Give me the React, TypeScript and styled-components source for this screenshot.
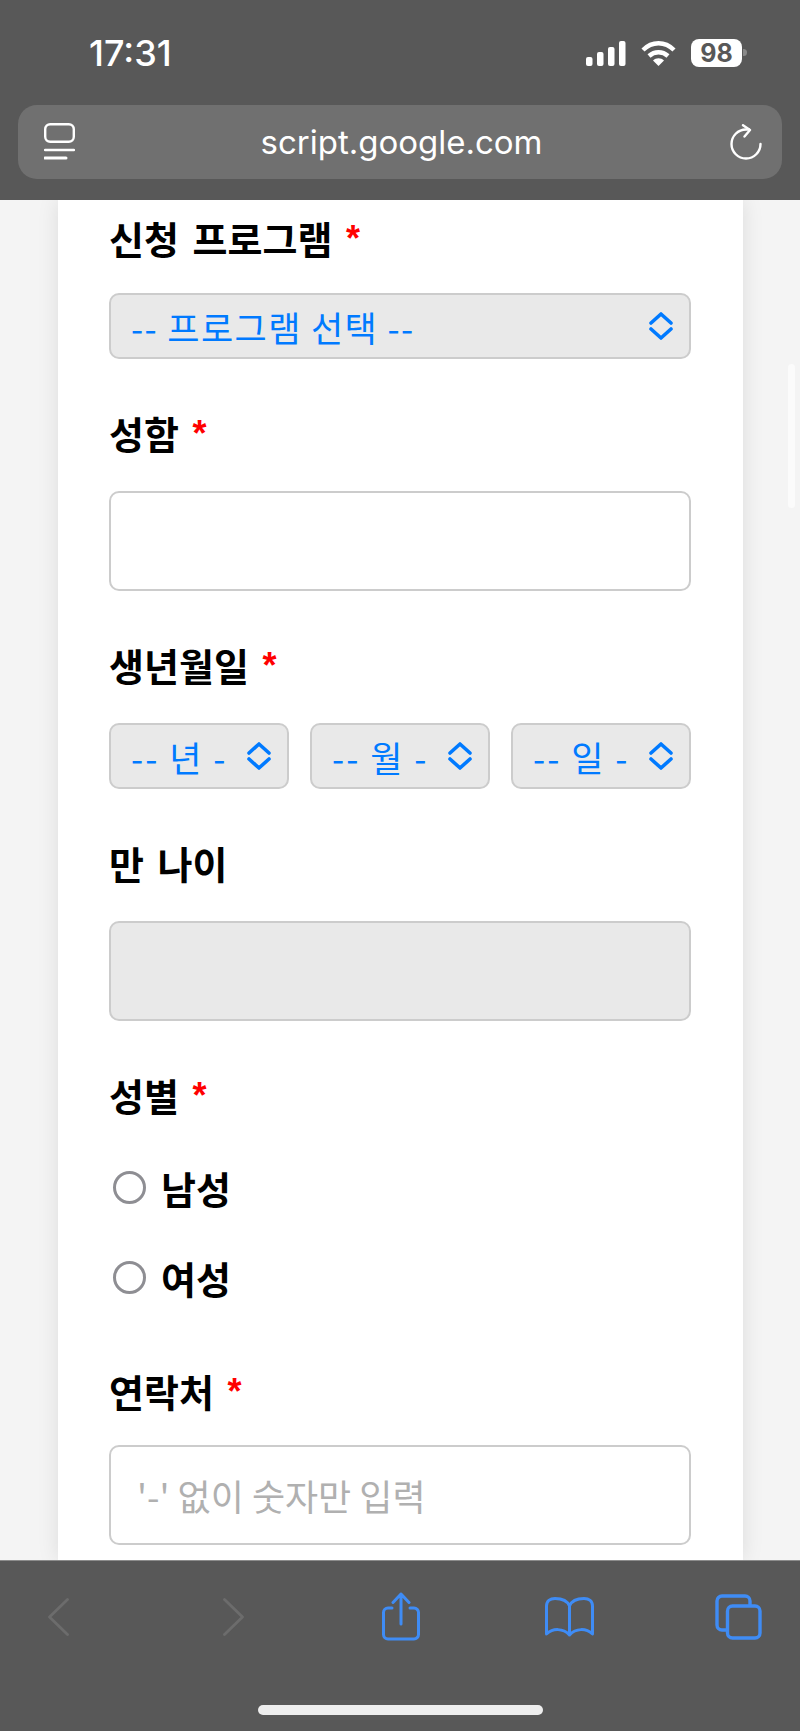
import styled, { createGlobalStyle } from "styled-components";

const GlobalStyle = createGlobalStyle`
  html, body {
    margin: 0;
    padding: 0;
    background: #f4f4f4;
  }
  * {
    box-sizing: border-box;
  }
`;

const Chevrons = () => (
  <ChevronSvg viewBox="0 0 24 28">
    <path d="M2 11 L12 2 L22 11 M2 17 L12 26 L22 17" />
  </ChevronSvg>
);

function App() {
  return (
    <Phone>
      <GlobalStyle />
      <BrowserHeader>
        <StatusBar>
          <Clock>17:31</Clock>
          <StatusIcons>
            <svg width="40" height="25" viewBox="0 0 40 25" fill="#fff">
              <rect x="0" y="16" width="6.5" height="9" rx="2" />
              <rect x="11" y="11" width="6.5" height="14" rx="2" />
              <rect x="22" y="6" width="6.5" height="19" rx="2" />
              <rect x="33" y="0" width="6.5" height="25" rx="2" />
            </svg>
            <svg width="35" height="25" viewBox="0 0 35 25" fill="none" stroke="#fff" strokeWidth="4.4">
              <path d="M2 9 C11 0 24 0 33 9" />
              <path d="M8 15 C13.500 10 21.500 10 27 15" />
              <path d="M12 19.500 L17.500 25 L23 19.500 C20 16.500 15 16.500 12 19.500 Z" fill="#fff" stroke="none" />
            </svg>
            <Battery>
              <BatteryLevel>98</BatteryLevel>
              <BatteryTip />
            </Battery>
          </StatusIcons>
        </StatusBar>
        <AddressBar>
          <svg width="31" height="38" viewBox="0 0 31 38" fill="none" stroke="#fff" strokeWidth="2.4" strokeLinecap="round">
            <rect x="1.200" y="1.200" width="28.600" height="17.600" rx="5" />
            <path d="M1 27 H30" />
            <path d="M1 35 H22" strokeWidth="3" />
          </svg>
          <Url>script.google.com</Url>
          <svg width="32" height="36" viewBox="0 0 32 36" fill="none" stroke="#fff" strokeWidth="2.400" strokeLinecap="round" strokeLinejoin="round">
            <path d="M30.500 20 A14.500 14.500 0 1 1 16 5.500 H19" />
            <path d="M13 1.200 L20 6 L14.500 12.500" />
          </svg>
        </AddressBar>
      </BrowserHeader>

      <Content>
        <ScrollThumb />
        <FormCard>
          <Group>
            <FieldLabel $gap={31}>
              신청 프로그램 <Required>*</Required>
            </FieldLabel>
            <SelectBox>
              -- 프로그램 선택 --
              <Chevrons />
            </SelectBox>
          </Group>

          <Group>
            <FieldLabel>
              성함 <Required>*</Required>
            </FieldLabel>
            <TextField type="text" />
          </Group>

          <Group>
            <FieldLabel>
              생년월일 <Required>*</Required>
            </FieldLabel>
            <DateRow>
              <SelectBox $spacing={2}>
                -- 년 -
                <Chevrons />
              </SelectBox>
              <SelectBox $spacing={2}>
                -- 월 -
                <Chevrons />
              </SelectBox>
              <SelectBox $spacing={2}>
                -- 일 -
                <Chevrons />
              </SelectBox>
            </DateRow>
          </Group>

          <Group>
            <FieldLabel>만 나이</FieldLabel>
            <TextField type="text" readOnly $disabled />
          </Group>

          <Group>
            <FieldLabel>
              성별 <Required>*</Required>
            </FieldLabel>
            <RadioList>
              <RadioRow>
                <RadioInput type="radio" name="gender" />
                남성
              </RadioRow>
              <RadioRow>
                <RadioInput type="radio" name="gender" />
                여성
              </RadioRow>
            </RadioList>
          </Group>

          <Group>
            <FieldLabel $gap={30}>
              연락처 <Required>*</Required>
            </FieldLabel>
            <TextField type="text" placeholder="'-' 없이 숫자만 입력" />
          </Group>
        </FormCard>
      </Content>

      <BottomBar>
        <ToolRow>
          <svg width="21" height="38" viewBox="0 0 21 38" fill="none" stroke="#6c6c6c" strokeWidth="2.800" strokeLinecap="round" strokeLinejoin="round">
            <path d="M19.500 1.500 L1.500 19 L19.500 36.500" />
          </svg>
          <svg width="21" height="38" viewBox="0 0 21 38" fill="none" stroke="#6c6c6c" strokeWidth="2.800" strokeLinecap="round" strokeLinejoin="round">
            <path d="M1.500 1.500 L19.500 19 L1.500 36.500" />
          </svg>
          <svg width="38" height="49" viewBox="0 0 38 49" fill="none" stroke="#3f8cf5" strokeWidth="3" strokeLinecap="round" strokeLinejoin="round">
            <path d="M10 16 H6 A4.500 4.500 0 0 0 1.500 20.500 V42.500 A4.500 4.500 0 0 0 6 47 H32 A4.500 4.500 0 0 0 36.500 42.500 V20.500 A4.500 4.500 0 0 0 32 16 H28" />
            <path d="M19 32 V2 M11 10.500 L19 2 L27 10.500" />
          </svg>
          <svg width="49" height="40" viewBox="0 0 49 40" fill="none" stroke="#3f8cf5" strokeWidth="3" strokeLinecap="round" strokeLinejoin="round">
            <path d="M24.500 9 C22 3 16 1.500 10 1.500 C5 1.500 1.500 4 1.500 9 V37 C8 31 18 31 24.500 38 C31 31 41 31 47.500 37 V9 C47.500 4 44 1.500 39 1.500 C33 1.500 27 3 24.500 9 V38" />
          </svg>
          <svg width="47" height="46" viewBox="0 0 47 46" fill="none" stroke="#3f8cf5" strokeWidth="3.400" strokeLinejoin="round">
            <path d="M12 36 H7 A5 5 0 0 1 2 31 V7 A5 5 0 0 1 7 2 H30 A5 5 0 0 1 35 7 V12" />
            <rect x="12.500" y="12" width="32.500" height="32" rx="5" />
          </svg>
        </ToolRow>
        <HomeIndicator />
      </BottomBar>
    </Phone>
  );
}

export default App;

const Phone = styled.div`
  width: 800px;
  height: 1731px;
  display: flex;
  flex-direction: column;
  overflow: hidden;
  background: #f4f4f4;
  font-family: "Noto Sans CJK KR", sans-serif;
`;

const BrowserHeader = styled.header`
  height: 200px;
  flex: none;
  background: #585858;
  padding-top: 39px;
  display: flex;
  flex-direction: column;
`;

const StatusBar = styled.div`
  height: 28px;
  padding: 0 58px 0 89px;
  display: flex;
  align-items: center;
  justify-content: space-between;
`;

const Clock = styled.div`
  font-family: Inter, sans-serif;
  font-size: 36px;
  font-weight: 500;
  color: #fff;
  line-height: 28px;
`;

const StatusIcons = styled.div`
  display: flex;
  align-items: center;
  gap: 15px;
`;

const Battery = styled.div`
  position: relative;
  width: 51px;
  height: 28px;
  border-radius: 8px;
  background: #fff;
  display: flex;
  align-items: center;
  justify-content: center;
`;

const BatteryLevel = styled.span`
  font-family: Inter, sans-serif;
  font-size: 25px;
  font-weight: 700;
  color: #585858;
`;

const BatteryTip = styled.span`
  position: absolute;
  right: -5px;
  top: 10px;
  width: 4px;
  height: 7px;
  border-radius: 0 4px 4px 0;
  background: #8a8a8a;
`;

const AddressBar = styled.div`
  margin: 38px 18px 0;
  height: 74px;
  border-radius: 19px;
  background: #707070;
  padding: 0 20px 0 26px;
  display: flex;
  align-items: center;
  justify-content: space-between;
`;

const Url = styled.div`
  font-family: Inter, sans-serif;
  font-size: 33px;
  color: #fff;
  margin-right: 2px;
`;

const Content = styled.main`
  position: relative;
  flex: 1;
  min-height: 0;
  overflow: hidden;
`;

const ScrollThumb = styled.div`
  position: absolute;
  right: 5px;
  top: 164px;
  width: 7px;
  height: 144px;
  border-radius: 4px;
  background: #fbfbfb;
`;

const FormCard = styled.div`
  width: 685px;
  margin-left: 58px;
  padding: 14px 52px 0 51px;
  background: #fff;
  box-shadow: 0 0 20px rgba(0, 0, 0, 0.1);
  min-height: 100%;
`;

const Group = styled.section`
  & + & {
    margin-top: 50px;
  }
`;

const FieldLabel = styled.div<{ $gap?: number }>`
  font-size: 38px;
  font-weight: 700;
  line-height: 48px;
  word-spacing: 5px;
  color: #000;
  margin-bottom: ${(p) => p.$gap ?? 34}px;
`;

const Required = styled.span`
  color: #f00;
  font-family: "Liberation Sans", sans-serif;
  font-size: 36px;
  line-height: 0;
  vertical-align: 3px;
`;

const SelectBox = styled.div<{ $spacing?: number }>`
  flex: 1;
  min-width: 0;
  height: 66px;
  padding: 0 16px 0 20px;
  border: 2px solid #ccc;
  border-radius: 10px;
  background: #e9e9e9;
  color: #007aff;
  font-size: 35px;
  letter-spacing: ${(p) => p.$spacing ?? 1.4}px;
  white-space: nowrap;
  display: flex;
  align-items: center;
  justify-content: space-between;
`;

const ChevronSvg = styled.svg`
  flex: none;
  width: 24px;
  height: 28px;
  fill: none;
  stroke: #007aff;
  stroke-width: 3.600;
  stroke-linecap: round;
  stroke-linejoin: round;
`;

const DateRow = styled.div`
  display: flex;
  gap: 21px;
`;

const TextField = styled.input<{ $disabled?: boolean }>`
  display: block;
  width: 100%;
  height: 100px;
  padding: 0 26px;
  border: 2px solid #ccc;
  border-radius: 10px;
  outline: none;
  background: ${(p) => (p.$disabled ? "#e9e9e9" : "#fff")};
  font-family: inherit;
  font-size: 36px;

  &::placeholder {
    color: #b0b0b0;
  }
`;

const RadioList = styled.div`
  display: flex;
  flex-direction: column;
  gap: 42px;
  padding: 10px 0 16px 4px;
`;

const RadioRow = styled.label`
  display: flex;
  align-items: center;
  gap: 15px;
  height: 48px;
  font-size: 38px;
  font-weight: 700;
  color: #000;
`;

const RadioInput = styled.input`
  appearance: none;
  margin: 0;
  width: 33px;
  height: 33px;
  border: 3px solid #8e8e93;
  border-radius: 50%;
  background: #fff;
`;

const BottomBar = styled.footer`
  height: 171px;
  flex: none;
  background: #585858;
  border-top: 1px solid #8c8c8c;
  position: relative;
`;

const ToolRow = styled.div`
  display: grid;
  grid-template-columns: 175px 159px 163px 170px auto;
  align-items: center;
  justify-items: start;
  padding: 31px 0 0 48px;
`;

const HomeIndicator = styled.div`
  position: absolute;
  left: 258px;
  bottom: 16px;
  width: 285px;
  height: 10px;
  border-radius: 5px;
  background: #eee;
`;
